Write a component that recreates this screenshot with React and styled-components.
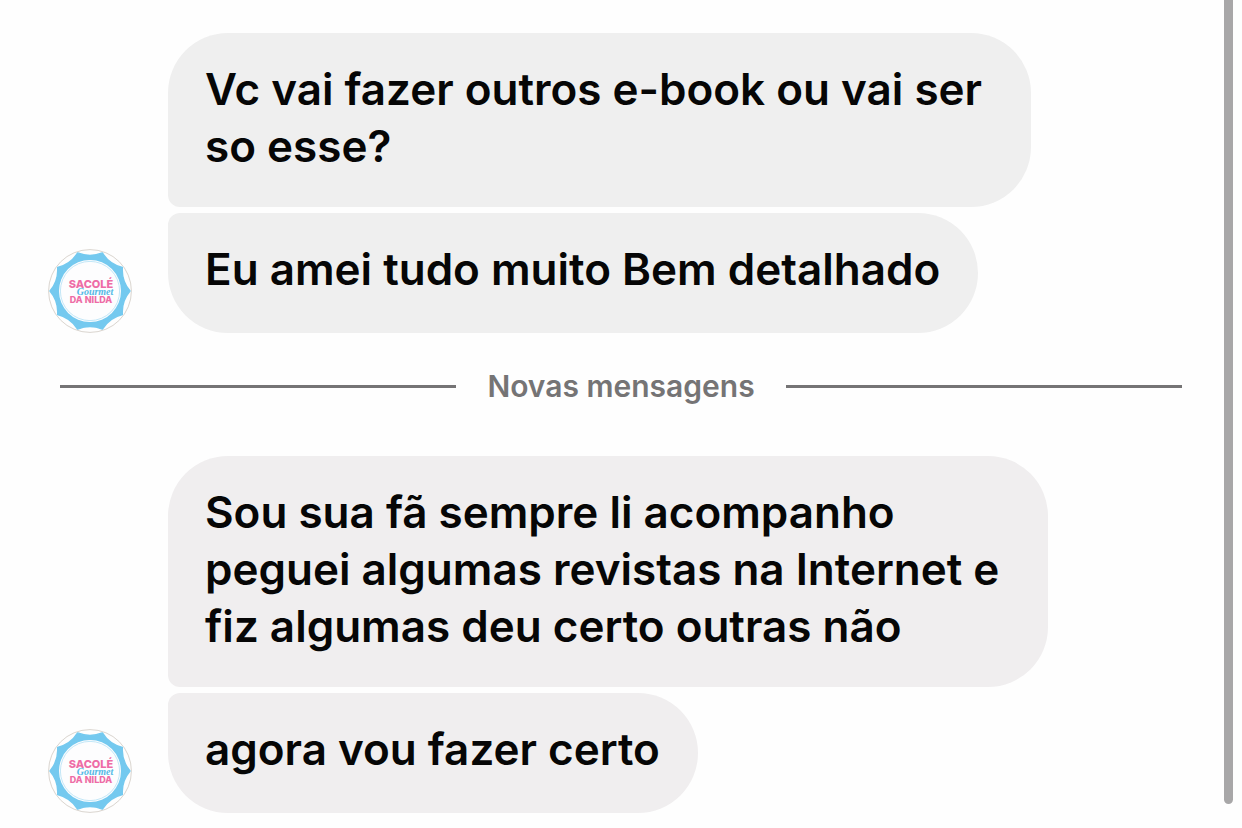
import React from "react";
import styled, { createGlobalStyle } from "styled-components";

const GlobalStyle = createGlobalStyle`
  *, *::before, *::after { box-sizing: border-box; }
  body {
    margin: 0;
    background: #fefefe;
    font-family: Inter, "Liberation Sans", sans-serif;
  }
`;

const Page = styled.div`
  display: flex;
  min-height: 100vh;
`;

const Chat = styled.main`
  flex: 1;
  min-width: 0;
  padding: 33px 0 15px;
`;

const ScrollThumb = styled.div`
  flex: none;
  width: 9px;
  margin: 0 9px 24px 0;
  border-radius: 0 0 5px 5px;
  background: #a8a7a8;
`;

const Group = styled.section`
  display: flex;
  align-items: flex-end;
  gap: 36px;
  padding: 0 48px;
`;

const Bubbles = styled.div`
  display: flex;
  flex-direction: column;
  align-items: flex-start;
  gap: 6px;
`;

const Bubble = styled.p`
  margin: 0;
  min-height: 120px;
  padding: 28px 38px 32px 37px;
  border-radius: ${({ $last }) => ($last ? "12px 60px 60px 60px" : "60px 60px 60px 12px")};
  background: ${({ $tone }) => $tone};
  color: #060606;
  font-size: 44px;
  font-weight: 600;
  line-height: 57px;
  white-space: pre;
`;

const Divider = styled.div`
  display: flex;
  align-items: center;
  gap: 31px;
  margin: 34px 42px 51px 60px;
  color: #757475;
  font-size: 30px;
  font-weight: 600;
  line-height: 38px;

  &::before,
  &::after {
    content: "";
    flex: 1;
    height: 3px;
    background: #757475;
  }
`;

const Avatar = styled.svg`
  flex: none;
  display: block;
  width: 84px;
  height: 84px;
`;

const scallop = (() => {
  const count = 10;
  const step = (Math.PI * 2) / count;
  const pt = (r, a) => `${(42 + r * Math.sin(a)).toFixed(2)} ${(42 - r * Math.cos(a)).toFixed(2)}`;
  let d = `M${pt(40, step / 2)}`;
  for (let i = 1; i <= count; i += 1) {
    d += `Q${pt(33, i * step)} ${pt(40, (i + 0.5) * step)}`;
  }
  return `${d}Z`;
})();

function Logo() {
  return (
    <Avatar viewBox="0 0 84 84" role="img" aria-label="Sacolé Gourmet da Nilda">
      <circle cx="42" cy="42" r="41.4" fill="#fefefe" stroke="#dad5cf" strokeWidth="1" />
      <path d={scallop} fill="#74c9ef" stroke="#74c9ef" strokeWidth="1.4" strokeLinejoin="round" />
      <circle cx="42" cy="42" r="31" fill="#fdfdfe" />
      <circle cx="42" cy="42" r="29.6" fill="none" stroke="#a9dcf3" strokeWidth="0.7" />
      <g textAnchor="middle" fontFamily="Inter, sans-serif" fontWeight="800" fill="#ee6ca6">
        <text x="43" y="39" fontSize="11">SACOLÉ</text>
        <text x="43" y="54" fontSize="9">DA NILDA</text>
      </g>
      <text
        x="47"
        y="46"
        textAnchor="middle"
        fontFamily="'Liberation Serif', serif"
        fontStyle="italic"
        fontWeight="700"
        fontSize="10"
        fill="#55b9e6"
      >
        Gourmet
      </text>
    </Avatar>
  );
}

const groups = [
  {
    tone: "#efefef",
    messages: ["Vc vai fazer outros e-book ou vai ser \nso esse?", "Eu amei tudo muito Bem detalhado"],
  },
  {
    tone: "#f0eeef",
    messages: [
      "Sou sua fã sempre li acompanho \npeguei algumas revistas na Internet e \nfiz algumas deu certo outras não",
      "agora vou fazer certo",
    ],
  },
];

function MessageGroup({ tone, messages }) {
  return (
    <Group>
      <Logo />
      <Bubbles>
        {messages.map((text, i) => (
          <Bubble key={text} $tone={tone} $last={i === messages.length - 1}>
            {text}
          </Bubble>
        ))}
      </Bubbles>
    </Group>
  );
}

export default function App() {
  return (
    <Page>
      <GlobalStyle />
      <Chat>
        <MessageGroup {...groups[0]} />
        <Divider role="separator">Novas mensagens</Divider>
        <MessageGroup {...groups[1]} />
      </Chat>
      <ScrollThumb />
    </Page>
  );
}
